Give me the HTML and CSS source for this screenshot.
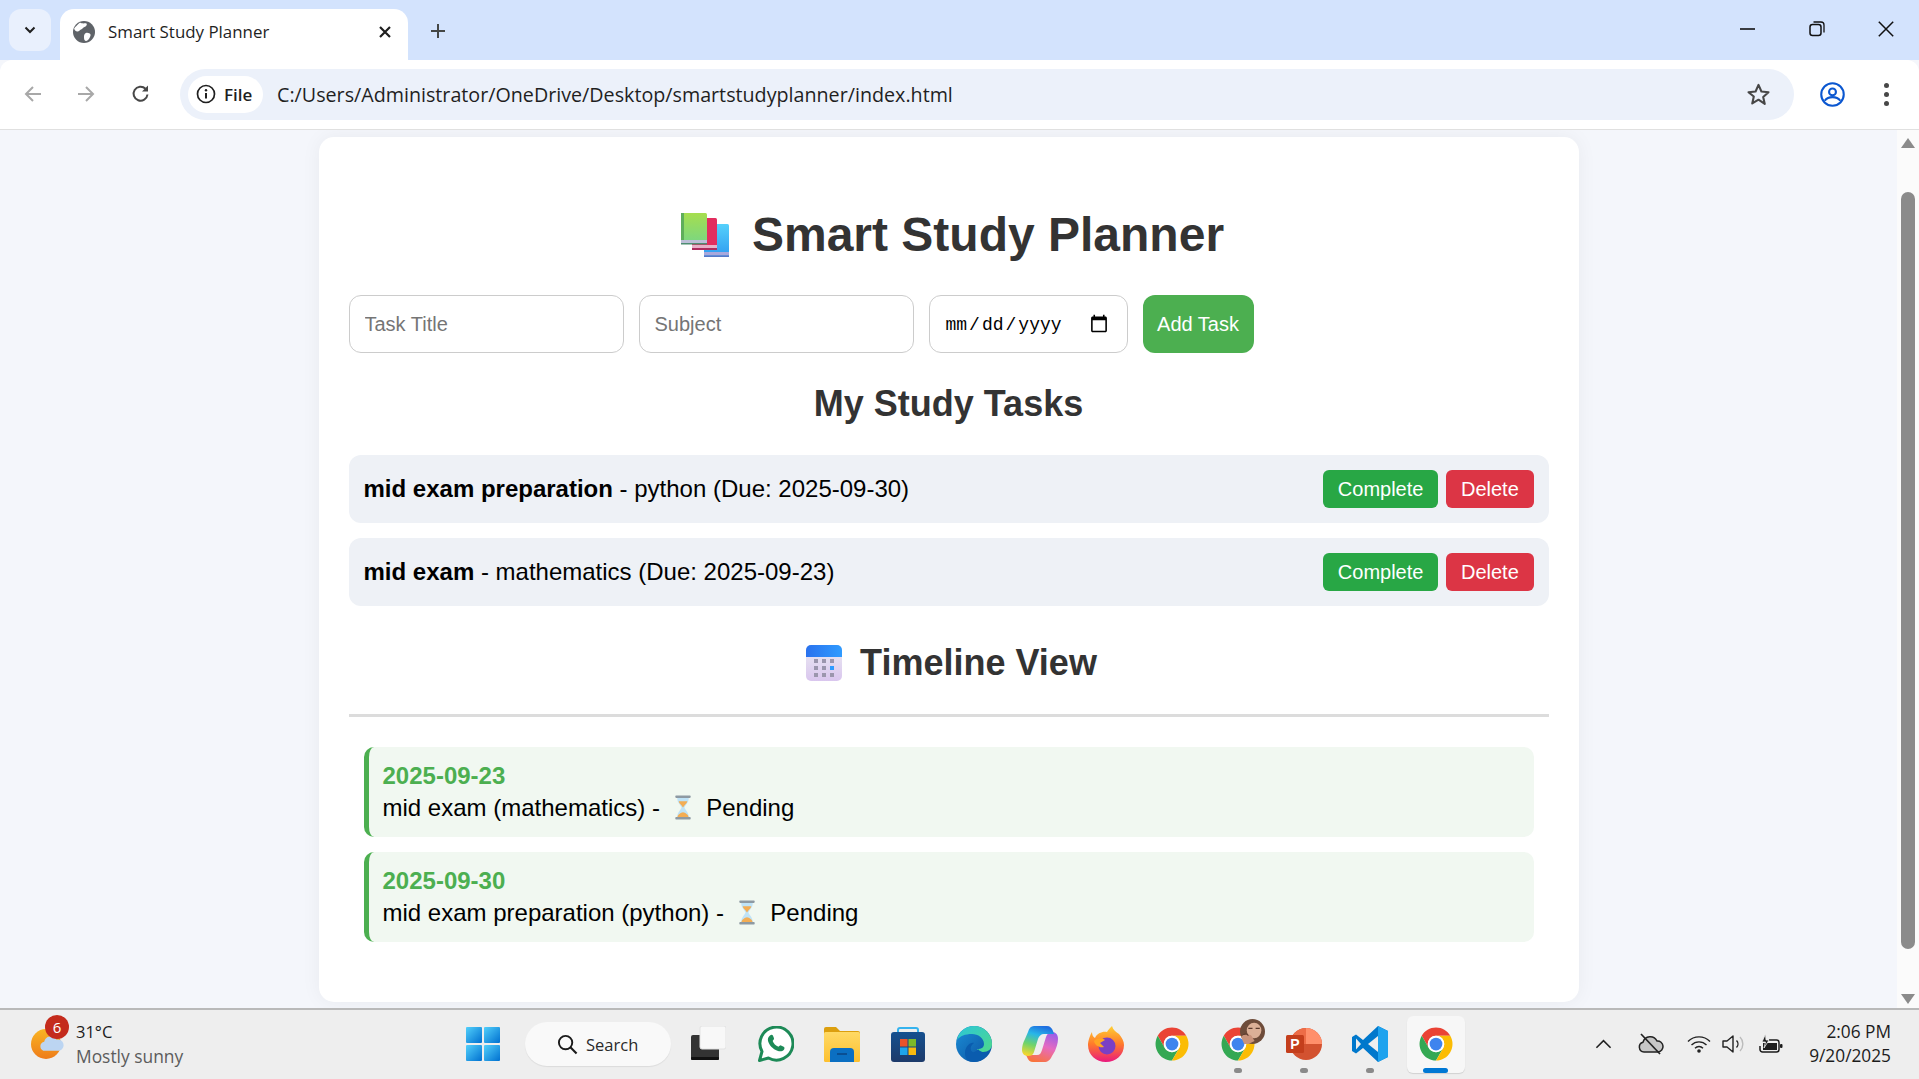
FILE: index.html
```html
<!DOCTYPE html>
<html lang="en">
<head>
<meta charset="utf-8">
<title>Smart Study Planner</title>
<link rel="stylesheet" href="styles.css">
</head>
<body>
<svg class="defs" aria-hidden="true">
  <defs>
    <linearGradient id="gBookG" x1="0" y1="0" x2="0" y2="1"><stop offset="0" stop-color="#a6de4e"/><stop offset="1" stop-color="#78d684"/></linearGradient>
    <linearGradient id="gBookB" x1="0" y1="0" x2="0" y2="1"><stop offset="0" stop-color="#55d0fb"/><stop offset="1" stop-color="#2f9bf0"/></linearGradient>
    <linearGradient id="gCalTop" x1="0" y1="0" x2="1" y2="0"><stop offset="0" stop-color="#2a72ee"/><stop offset="1" stop-color="#2f9bff"/></linearGradient>
    <linearGradient id="gCal" x1="0" y1="0" x2="0" y2="1"><stop offset="0" stop-color="#ececf2"/><stop offset="1" stop-color="#d9c6ee"/></linearGradient>
    <linearGradient id="gWin" x1="0" y1="0" x2="1" y2="1"><stop offset="0" stop-color="#52d0fb"/><stop offset="1" stop-color="#0070d0"/></linearGradient>
    <linearGradient id="gFolder" x1="0" y1="0" x2="0" y2="1"><stop offset="0" stop-color="#ffd965"/><stop offset="1" stop-color="#fdc02f"/></linearGradient>
    <linearGradient id="gStore" x1="0" y1="0" x2="0" y2="1"><stop offset="0" stop-color="#15508f"/><stop offset="1" stop-color="#1d3a6a"/></linearGradient>
    <linearGradient id="gEdge" x1="0" y1="0" x2="1" y2="1"><stop offset="0" stop-color="#2cc6d8"/><stop offset="1" stop-color="#4ed98b"/></linearGradient>
    <linearGradient id="gEdgeB" x1="0" y1="0" x2="1" y2="1"><stop offset="0" stop-color="#1b8fd8"/><stop offset="1" stop-color="#0b4f9e"/></linearGradient>
    <linearGradient id="gCopA" x1="0.6" y1="0" x2="0.3" y2="1"><stop offset="0" stop-color="#1f6fe0"/><stop offset="0.3" stop-color="#28b6e8"/><stop offset="0.65" stop-color="#6fd36a"/><stop offset="1" stop-color="#f2d62e"/></linearGradient>
    <linearGradient id="gCopB" x1="0.7" y1="0" x2="0.3" y2="1"><stop offset="0" stop-color="#9a5fe8"/><stop offset="0.45" stop-color="#e66ac0"/><stop offset="1" stop-color="#f9743a"/></linearGradient>
    <linearGradient id="gFox" x1="0" y1="0" x2="0" y2="1"><stop offset="0" stop-color="#ffd033"/><stop offset="0.5" stop-color="#ff7a2b"/><stop offset="1" stop-color="#e9197e"/></linearGradient>
    <linearGradient id="gSun" x1="0" y1="0" x2="0" y2="1"><stop offset="0" stop-color="#f9b524"/><stop offset="1" stop-color="#ee7c1a"/></linearGradient>
    <symbol id="chrome" viewBox="0 0 48 48">
      <path fill="#ea4335" d="M24 2C15.900 2 8.800 6.400 5 13l9.500 16.500A11 11 0 0 1 24 13h19.050C39.200 6.400 32.100 2 24 2z"/>
      <path fill="#34a853" d="M5 13A22 22 0 0 0 24 46l9.500-16.500A11 11 0 0 1 14.500 29.500z"/>
      <path fill="#fbbc04" d="M43.050 13H24a11 11 0 0 1 9.500 16.500L24 46A22 22 0 0 0 43.050 13z"/>
      <circle cx="24" cy="24" r="11" fill="#fff"/>
      <circle cx="24" cy="24" r="8.500" fill="#3f84ee"/>
    </symbol>
    <symbol id="hourglass" viewBox="0 0 20 26">
      <rect x="2" y="0.500" width="16" height="2.500" rx="0.800" fill="#8e9aa3"/>
      <rect x="2" y="23" width="16" height="2.500" rx="0.800" fill="#8e9aa3"/>
      <path d="M4 3h12c0 5-3.500 7-4.500 10 1 3 4.500 5 4.500 10H4c0-5 3.500-7 4.500-10C7.500 10 4 8 4 3z" fill="#bfe3f7"/>
      <path d="M5.500 6.500h9C14 9 11.500 10.500 10 13 8.500 10.500 6 9 5.500 6.500z" fill="#f3ad54"/>
      <path d="M4.200 23c.3-2.500 3.500-4.500 5.800-5 2.300.5 5.500 2.500 5.800 5z" fill="#f3ad54"/>
    </symbol>
  </defs>
</svg>

<header class="tabstrip">
  <div class="tab-search">
    <svg class="ic16" viewBox="0 0 16 16"><path d="M3.500 5.500 8 10l4.500-4.500" fill="none" stroke="#1f1f1f" stroke-width="2"/></svg>
  </div>
  <div class="tab">
    <svg class="favicon" viewBox="0 0 22 22"><circle cx="11" cy="11" r="11" fill="#5f6368"/><path d="M7 1.500c2 1.500 5 .5 6.500 1 1 1-.5 3-2 3.500S9.500 8 8 8.500 6 11 4 10.500 1 8 1.200 7.500 5 3 7 1.500zM13 12c2-.5 4 .5 4.500 1.500s-1 4-2.500 5.500-3 1-3.500 0-.5-2.500-.5-3.500.5-3 2-3.500z" fill="#fff"/></svg>
    <span class="tab-title">Smart Study Planner</span>
    <svg class="tab-close" viewBox="0 0 14 14"><path d="M2 2l10 10M12 2 2 12" stroke="#1f1f1f" stroke-width="2.200"/></svg>
  </div>
  <svg class="new-tab" viewBox="0 0 16 16"><path d="M8 1v14M1 8h14" stroke="#444746" stroke-width="2"/></svg>
  <div class="win-controls">
    <svg class="win-btn" viewBox="0 0 16 16"><path d="M0 8h15" stroke="#111" stroke-width="1.600"/></svg>
    <svg class="win-btn" viewBox="0 0 16 16"><rect x="1" y="3.500" width="11" height="11" rx="2.500" fill="none" stroke="#111" stroke-width="1.500"/><path d="M4.500 1h7.500a3 3 0 0 1 3 3v7.500" fill="none" stroke="#111" stroke-width="1.300"/></svg>
    <svg class="win-btn" viewBox="0 0 16 16"><path d="M.8.800l14.400 14.400M15.200.800.800 15.200" stroke="#111" stroke-width="1.500"/></svg>
  </div>
</header>

<nav class="toolbar">
  <svg class="nav-ic" viewBox="0 0 20 20"><path d="M18 10H3M10 3l-7 7 7 7" fill="none" stroke="#a8a8a8" stroke-width="2"/></svg>
  <svg class="nav-ic" viewBox="0 0 20 20"><path d="M2 10h15M10 3l7 7-7 7" fill="none" stroke="#a8a8a8" stroke-width="2"/></svg>
  <svg class="nav-ic nav-reload" viewBox="0 0 20 20"><path d="M16.500 10.500A7 7 0 1 1 14.500 4.700" fill="none" stroke="#474747" stroke-width="2"/><path d="M17 1.500V7.500h-6z" fill="#474747"/></svg>
  <div class="omnibox">
    <div class="chip">
      <svg class="info" viewBox="0 0 20 20"><circle cx="10" cy="10" r="8.500" fill="none" stroke="#1f1f1f" stroke-width="1.700"/><path d="M10 9v5.500" stroke="#1f1f1f" stroke-width="2"/><circle cx="10" cy="6.200" r="1.200" fill="#1f1f1f"/></svg>
      <span class="chip-text">File</span>
    </div>
    <span class="url">C:/Users/Administrator/OneDrive/Desktop/smartstudyplanner/index.html</span>
    <svg class="star" viewBox="0 0 24 24"><path d="M12 2.800l2.800 6.300 6.800.7-5.100 4.600 1.500 6.700L12 17l-6 3.600 1.500-6.700L2.400 9.800l6.800-.7z" fill="none" stroke="#474747" stroke-width="2" stroke-linejoin="round"/></svg>
  </div>
  <svg class="profile" viewBox="0 0 24 24"><circle cx="12" cy="12" r="10.800" fill="none" stroke="#0b57d0" stroke-width="2"/><circle cx="12" cy="9.500" r="3.300" fill="none" stroke="#0b57d0" stroke-width="2"/><path d="M4.500 18c2-2.700 4.500-3.500 7.500-3.500s5.500.8 7.500 3.500" fill="none" stroke="#0b57d0" stroke-width="2"/></svg>
  <div class="kebab"><i></i><i></i><i></i></div>
</nav>

<div class="viewport">
  <main class="page">
    <section class="card">
      <h1 class="title">
        <svg class="emoji-books" viewBox="0 0 48 44">
          <rect x="23" y="11" width="25" height="33" rx="1.500" fill="url(#gBookB)"/>
          <rect x="23" y="39" width="25" height="3.500" fill="#a9a8dc"/>
          <rect x="23" y="42.500" width="25" height="1.500" fill="#5878c8"/>
          <rect x="11" y="5" width="25" height="32" rx="1.500" fill="#e22d5e"/>
          <rect x="11" y="32" width="25" height="3" fill="#e8b0c8"/>
          <rect x="11" y="35" width="25" height="2" fill="#ad2c5e"/>
          <rect y="0" width="26" height="31" rx="1.500" fill="url(#gBookG)"/>
          <rect y="0" width="3" height="31" fill="#5fae5a"/>
          <rect x="0" y="27" width="26" height="3" fill="#bdbfd8"/>
          <rect x="0" y="30" width="26" height="1.500" fill="#4e8e72"/>
        </svg>
        <span>Smart Study Planner</span>
      </h1>

      <form class="task-form">
        <input class="field field-text" type="text" placeholder="Task Title">
        <input class="field field-text" type="text" placeholder="Subject">
        <input class="field field-date" type="date">
        <button class="add-btn" type="button">Add Task</button>
      </form>

      <h2 class="section-title">My Study Tasks</h2>

      <ul class="tasks">
        <li class="task">
          <span><b>mid exam preparation</b> - python (Due: 2025-09-30)</span>
          <span class="actions"><button class="btn btn-complete" type="button">Complete</button><button class="btn btn-delete" type="button">Delete</button></span>
        </li>
        <li class="task">
          <span><b>mid exam</b> - mathematics (Due: 2025-09-23)</span>
          <span class="actions"><button class="btn btn-complete" type="button">Complete</button><button class="btn btn-delete" type="button">Delete</button></span>
        </li>
      </ul>

      <h2 class="section-title timeline-title">
        <svg class="emoji-cal" viewBox="0 0 36 36">
          <rect width="36" height="36" rx="5" fill="url(#gCal)"/>
          <path d="M0 12V5a5 5 0 0 1 5-5h26a5 5 0 0 1 5 5v7z" fill="url(#gCalTop)"/>
          <g fill="#9b96ad">
            <rect x="8" y="14" width="4" height="4"/><rect x="16" y="14" width="4" height="4"/><rect x="24" y="14" width="4" height="4"/>
            <rect x="8" y="21" width="4" height="4"/><rect x="16" y="21" width="4" height="4"/>
            <rect x="8" y="28" width="4" height="4"/><rect x="16" y="28" width="4" height="4"/><rect x="24" y="28" width="4" height="4"/>
          </g>
          <rect x="24" y="21" width="4" height="4" fill="#2f9bff"/>
        </svg>
        <span>Timeline View</span>
      </h2>
      <div class="rule"></div>

      <div class="timeline">
        <article class="event">
          <div class="event-date">2025-09-23</div>
          <div class="event-text">mid exam (mathematics) - <svg class="emoji-glass"><use href="#hourglass"/></svg> Pending</div>
        </article>
        <article class="event">
          <div class="event-date">2025-09-30</div>
          <div class="event-text">mid exam preparation (python) - <svg class="emoji-glass"><use href="#hourglass"/></svg> Pending</div>
        </article>
      </div>
    </section>
  </main>
  <aside class="scrollbar">
    <svg class="sb-arrow" viewBox="0 0 14 10"><path d="M7 0l7 10H0z" fill="#8b8b8b"/></svg>
    <div class="sb-thumb"></div>
    <svg class="sb-arrow" viewBox="0 0 14 10"><path d="M0 0h14L7 10z" fill="#8b8b8b"/></svg>
  </aside>
</div>

<footer class="taskbar">
  <div class="weather">
    <div class="weather-icon">
      <svg class="sun" viewBox="0 0 36 32">
        <circle cx="15" cy="16" r="15" fill="url(#gSun)"/>
        <path d="M15 26a5 5 0 0 1 1-9.500 7 7 0 0 1 13-2 5.500 5.500 0 0 1 3 11.500z" fill="#bcd5f2" transform="translate(-2 -2) scale(.95)"/>
      </svg>
      <span class="badge">6</span>
    </div>
    <div class="weather-text">
      <span class="temp">31°C</span>
      <span class="cond">Mostly sunny</span>
    </div>
  </div>
  <div class="apps">
    <div class="app">
      <svg class="app-ic" viewBox="0 0 36 36"><rect x="1" y="1" width="16" height="16" rx="1" fill="url(#gWin)"/><rect x="19" y="1" width="16" height="16" rx="1" fill="url(#gWin)"/><rect x="1" y="19" width="16" height="16" rx="1" fill="url(#gWin)"/><rect x="19" y="19" width="16" height="16" rx="1" fill="url(#gWin)"/></svg>
    </div>
    <div class="search-pill">
      <svg class="search-ic" viewBox="0 0 22 22"><circle cx="9" cy="9" r="7" fill="none" stroke="#1a1a1a" stroke-width="2"/><path d="M14 14l6.500 6.500" stroke="#1a1a1a" stroke-width="2.200"/></svg>
      <span>Search</span>
    </div>
    <div class="app app-view">
      <svg class="app-ic" viewBox="0 0 36 36"><rect x="1" y="9" width="28" height="25" rx="2" fill="#333"/><rect x="1" y="31" width="28" height="3" rx="1" fill="#111"/><rect x="10" y="0" width="26" height="23" rx="2" fill="#f8f8f8" stroke="#e2e2e2"/></svg>
    </div>
    <div class="app">
      <svg class="app-ic" viewBox="0 0 36 36"><path d="M1.500 34.500l2.500-9A16.500 16.500 0 1 1 10.500 32z" fill="#fff" stroke="#1d8a57" stroke-width="3" stroke-linejoin="round"/><path d="M12 9.500c1-1 2.500-1 3 .2l1 2.600c.2.800-.8 2-1.300 2.600.8 2.500 3 4.700 5.800 5.800.7-.5 1.800-1.600 2.500-1.300l2.700 1.300c1 .5 1 2 .2 3-1.500 1.800-4 2-6.500 1-4.500-1.700-8-5.300-9.300-9.500-.6-2.500 0-4.300 1.900-5.700z" fill="#1d8a57"/></svg>
    </div>
    <div class="app">
      <svg class="app-ic" viewBox="0 0 36 36"><path d="M0 3a2 2 0 0 1 2-2h10l4 4h18a2 2 0 0 1 2 2v6H0z" fill="#dc9f0e"/><rect y="6" width="36" height="30" rx="1.500" fill="url(#gFolder)"/><path d="M6 36V26a4 4 0 0 1 4-4h16a4 4 0 0 1 4 4v10z" fill="#0b6fc2"/><rect x="13" y="27" width="10" height="2" fill="#0a4f93"/></svg>
    </div>
    <div class="app">
      <svg class="app-ic" viewBox="0 0 36 36"><path d="M8 9V4a2 2 0 0 1 2-2h16a2 2 0 0 1 2 2v5" fill="none" stroke="#35b3ee" stroke-width="2"/><rect x="1" y="6" width="34" height="30" rx="3" fill="url(#gStore)"/><rect x="10" y="13" width="7.500" height="7.500" fill="#e8532a"/><rect x="18.500" y="13" width="7.500" height="7.500" fill="#7db928"/><rect x="10" y="21.500" width="7.500" height="7.500" fill="#1ea5ea"/><rect x="18.500" y="21.500" width="7.500" height="7.500" fill="#fab90d"/></svg>
    </div>
    <div class="app">
      <svg class="app-ic" viewBox="0 0 36 36"><circle cx="18" cy="18" r="18" fill="url(#gEdgeB)"/><path d="M1 14C3 5 10 0 18 0c10 0 18 8 18 18 0 5-4 8-9 8-3 0-6-1-6-3 5 0 7-2 7-5 0-6-6-10-12-10C9 8 4 10 1 14z" fill="url(#gEdge)"/><path d="M22 23c2 3 6 4 11 3-3 6-9 10-15 10-6 0-9-3-9-9 0-6 5-11 9-10-3 2-4 5-3 7 1 3 4 3 7-1z" fill="#0a5cae"/></svg>
    </div>
    <div class="app">
      <svg class="app-ic" viewBox="0 0 36 36"><path d="M36 13c0 5-2 9-3 12l-3 5c-2 4-4 6-8 6H11c-3 0-5-2-6-5l-1-2h11c3 0 4-2 5-5l4-13c1-3 3-5 6-5 4 0 6 3 6 7z" fill="url(#gCopB)"/><path d="M12 0h13c3 0 5 2 6 5l1 3H22c-3 0-5 2-6 5l-4 13c-1 3-3 4-6 4-4 0-6-3-6-6 0-4 1-7 3-11l3-7c1-4 3-6 6-6z" fill="url(#gCopA)"/></svg>
    </div>
    <div class="app">
      <svg class="app-ic" viewBox="0 0 36 36"><path d="M24 0c1 4 4 6 7 8 3 4 5 7 5 11 0 10-8 17-18 17S0 29 0 19C0 15 2 9 4 6c0 3 1 5 3 6 2-5 8-7 12-6 1-2 3-4 5-6z" fill="url(#gFox)"/><circle cx="19" cy="20" r="8.500" fill="#7a3fc4"/><path d="M6 15c3-3 8-3 11-1l-5 3 4 4c-4 1-9-1-10-6z" fill="#ffa423"/></svg>
    </div>
    <div class="app"><svg class="app-ic"><use href="#chrome"/></svg></div>
    <div class="app app-open">
      <svg class="app-ic"><use href="#chrome"/></svg>
      <svg class="avatar" viewBox="0 0 24 24"><circle cx="12" cy="12" r="12" fill="#6e4c3a"/><ellipse cx="13.500" cy="11" rx="7" ry="7.500" fill="#dcb097"/><path d="M8 9h4M15 9h4" stroke="#5a3a2c" stroke-width="1.400"/><path d="M1 17c3-3 7-3 10-1l3 5-6 3H4z" fill="#c9937b"/><path d="M3 15c2-1 4-1 5 1" stroke="#5a3a2c" fill="none"/></svg>
    </div>
    <div class="app app-open">
      <svg class="app-ic" viewBox="0 0 36 36"><circle cx="20" cy="18" r="16" fill="#d35230"/><path d="M20 2a16 16 0 0 1 16 16H20z" fill="#ff8f6b"/><path d="M20 2a16 16 0 0 0-16 16h16z" fill="#ed6c47"/><rect x="0" y="9" width="18" height="18" rx="1.500" fill="#c43e1c"/><text class="ppt-p" x="9" y="23" text-anchor="middle">P</text></svg>
    </div>
    <div class="app app-open">
      <svg class="app-ic" viewBox="0 0 36 36"><path d="M26 0l10 5v26l-10 5-15-14-7 5.500-4-2.500V11l4-2.500L11 14z" fill="#0078cc"/><path d="M26 0l10 5v26l-10 5z" fill="#1fa3ee"/><path d="M26 10v16l-10-8z" fill="#eee"/><path d="M4 12.500v11l5-5.500z" fill="#eee"/></svg>
    </div>
    <div class="app app-active">
      <svg class="app-ic"><use href="#chrome"/></svg>
    </div>
  </div>
  <div class="tray">
    <svg class="tray-ic chevron" viewBox="0 0 18 12"><path d="M1.500 10 9 2.500 16.500 10" fill="none" stroke="#222" stroke-width="1.700"/></svg>
    <svg class="tray-ic cloud" viewBox="0 0 26 22"><path d="M6 19a5 5 0 0 1-1-9.800A7.500 7.500 0 0 1 19 8a5.500 5.500 0 0 1 1 11z" fill="#c6c6c6" stroke="#222" stroke-width="1.500"/><path d="M3 1l19 20" stroke="#222" stroke-width="1.700"/></svg>
    <svg class="tray-ic wifi" viewBox="0 0 24 18"><path d="M1 6.500a15.500 15.500 0 0 1 22 0M4.500 10a10.500 10.500 0 0 1 15 0M8 13.300a5.500 5.500 0 0 1 8 0" fill="none" stroke="#222" stroke-width="1.400"/><circle cx="12" cy="16" r="1.800" fill="#222"/></svg>
    <svg class="tray-ic vol" viewBox="0 0 24 20"><path d="M1 7h4l6-5v16l-6-5H1z" fill="none" stroke="#222" stroke-width="1.400" stroke-linejoin="round"/><path d="M14.500 6.500a5 5 0 0 1 0 7" fill="none" stroke="#222" stroke-width="1.400"/><path d="M18 3a10 10 0 0 1 0 14" fill="none" stroke="#bbb" stroke-width="1.400"/></svg>
    <svg class="tray-ic batt" viewBox="0 0 24 20"><path d="M10 6h7.500a2.500 2.500 0 0 1 2.500 2.500v7a2.500 2.500 0 0 1-2.500 2.500h-14A2.500 2.500 0 0 1 1 15.500V12" fill="none" stroke="#1c1c1c" stroke-width="1.500"/><rect x="4" y="9" width="14" height="7" fill="#1c1c1c"/><rect x="21" y="10" width="2.500" height="4" rx="1" fill="#1c1c1c"/><path d="M6.500 0 3 8h3.500L5 14l5-8H7z" fill="#1c1c1c" stroke="#eee" stroke-width=".800"/></svg>
    <div class="clock"><span>2:06 PM</span><span>9/20/2025</span></div>
  </div>
</footer>
</body>
</html>
```

FILE: styles.css
```css
* { box-sizing: border-box; }
html, body { margin: 0; height: 100%; }
body {
  width: 1919px;
  height: 1079px;
  overflow: hidden;
  display: flex;
  flex-direction: column;
  font-family: "Liberation Sans", Arial, sans-serif;
  background: #f4f6fb;
  color: #000;
}
.defs { position: absolute; width: 0; height: 0; }

/* Browser chrome */
.tabstrip {
  height: 60px;
  flex: none;
  display: flex;
  align-items: flex-start;
  padding: 9px 0 0 9px;
  background: #d3e3fd;
}
.tab-search {
  width: 42px;
  height: 42px;
  border-radius: 12px;
  background: #e9f0fd;
  display: flex;
  align-items: center;
  justify-content: center;
}
.ic16 { width: 16px; height: 16px; }
.tab {
  width: 348px;
  height: 51px;
  margin-left: 9px;
  padding: 0 16px 6px 13px;
  display: flex;
  align-items: center;
  background: #fff;
  border-radius: 14px 14px 0 0;
}
.favicon { width: 22px; height: 22px; flex: none; }
.tab-title {
  margin-left: 13px;
  flex: 1;
  font: 16.9px "Open Sans", sans-serif;
  color: #1f1f1f;
}
.tab-close { width: 14px; height: 14px; }
.new-tab { width: 16px; height: 16px; margin: 14px 0 0 22px; }
.win-controls {
  margin-left: auto;
  display: flex;
  gap: 53px;
  padding: 12px 25px 0 0;
}
.win-btn { width: 16px; height: 16px; }

.toolbar {
  height: 70px;
  flex: none;
  display: flex;
  align-items: center;
  background: #fff;
  border-bottom: 1px solid #e0e0e0;
  border-radius: 12px 12px 0 0;
  padding: 0 0 1px 23px;
}
.nav-ic { width: 20px; height: 20px; margin-right: 33px; flex: none; }
.nav-reload { margin-left: 2px; }
.omnibox {
  width: 1614px;
  height: 51px;
  margin-left: -4px;
  display: flex;
  align-items: center;
  padding: 0 23px 0 8px;
  background: #ecf1fa;
  border-radius: 26px;
}
.chip {
  width: 75px;
  height: 37px;
  flex: none;
  display: flex;
  align-items: center;
  gap: 8px;
  padding-left: 8px;
  background: #fff;
  border-radius: 19px;
}
.info { width: 20px; height: 20px; flex: none; }
.chip-text { font: 600 17px "Open Sans", sans-serif; color: #1f1f1f; }
.url {
  flex: 1;
  margin-left: 14px;
  font: 19.7px "Open Sans", sans-serif;
  color: #1f1f1f;
  white-space: nowrap;
}
.star { width: 25px; height: 25px; flex: none; }
.profile { width: 25px; height: 25px; margin-left: 26px; flex: none; }
.kebab {
  margin-left: 39px;
  display: flex;
  flex-direction: column;
  gap: 4px;
}
.kebab i { width: 5px; height: 5px; border-radius: 50%; background: #474747; display: block; }

/* Page viewport */
.viewport {
  flex: 1;
  min-height: 0;
  display: flex;
}
.page {
  flex: 1;
  display: flex;
  justify-content: center;
  padding-top: 7px;
  overflow: hidden;
}
.card {
  width: 1260px;
  height: 865px;
  padding: 61px 30px 0;
  background: #fff;
  border-radius: 15px;
  box-shadow: 0 0 20px rgba(0, 0, 0, 0.05);
}
.title {
  margin: 0;
  height: 74px;
  padding-left: 8px;
  display: flex;
  align-items: center;
  justify-content: center;
  gap: 23px;
  font-size: 48px;
  line-height: 74px;
  font-weight: 700;
  color: #333;
}
.emoji-books { width: 48px; height: 44px; }
.task-form {
  display: flex;
  gap: 15px;
  margin-top: 23px;
}
.field {
  height: 58px;
  padding: 0 15px;
  font-family: "Liberation Sans", Arial, sans-serif;
  font-size: 20px;
  background: #fff;
  border: 1.25px solid #ccc;
  border-radius: 12px;
}
.field::placeholder { color: #757575; }
.field-text { width: 275px; }
.field-date { width: 199px; padding-right: 16px; }
.field-date::-webkit-datetime-edit {
  padding-top: 2px;
  font-family: "Liberation Mono", monospace;
  font-size: 18px;
}
.field-date::-webkit-datetime-edit-text { padding: 0 1px; }
.add-btn {
  width: 111px;
  height: 58px;
  font-family: inherit;
  font-size: 20px;
  color: #fff;
  background: #4caf50;
  border: 0;
  border-radius: 12px;
}
.section-title {
  margin: 0;
  text-align: center;
  font-size: 36px;
  line-height: 44px;
  font-weight: 700;
  color: #333;
}
.task-form + .section-title { margin-top: 29px; }
.tasks {
  list-style: none;
  margin: 29px 0 0;
  padding: 0;
  display: flex;
  flex-direction: column;
  gap: 15px;
}
.task {
  height: 68px;
  padding: 0 15px;
  display: flex;
  align-items: center;
  justify-content: space-between;
  font-size: 24px;
  background: #eef1f6;
  border-radius: 12px;
}
.actions { display: flex; gap: 8px; }
.btn {
  height: 38px;
  padding: 0 14.75px;
  font-family: inherit;
  font-size: 20px;
  color: #fff;
  border: 0;
  border-radius: 6px;
}
.btn-complete { background: #28a745; }
.btn-delete { background: #dc3545; }
.timeline-title {
  margin-top: 35px;
  padding-left: 6px;
  display: flex;
  align-items: center;
  justify-content: center;
  gap: 18px;
}
.emoji-cal { width: 36px; height: 36px; }
.rule {
  height: 3px;
  margin-top: 29px;
  background: #dcdcdc;
}
.timeline {
  margin-top: 30px;
  padding: 0 15px;
  display: flex;
  flex-direction: column;
  gap: 15px;
}
.event {
  height: 90px;
  padding: 13px 14px 0;
  font-size: 24px;
  line-height: 32px;
  background: #f1f8f1;
  border-left: 5px solid #4caf50;
  border-radius: 10px;
}
.event-date { font-weight: 700; color: #4caf50; }
.event-text { white-space: pre-wrap; }
.emoji-glass { width: 20px; height: 25px; margin: 0 6.5px; vertical-align: -4px; }

/* Scrollbar */
.scrollbar {
  width: 22px;
  flex: none;
  display: flex;
  flex-direction: column;
  align-items: center;
  padding: 8px 0 4px;
  background: #fbfbfb;
}
.sb-arrow { width: 14px; height: 10px; flex: none; }
.sb-thumb {
  width: 14px;
  flex: 1;
  margin: 44px 0 45px;
  border-radius: 7px;
  background: #8b8b8b;
}

/* Taskbar */
.taskbar {
  height: 71px;
  flex: none;
  display: flex;
  align-items: center;
  padding-bottom: 1px;
  background: #eeeeee;
  border-top: 2px solid #b9b9b9;
}
.weather {
  width: 450px;
  flex: none;
  display: flex;
  align-items: center;
  gap: 9px;
  padding-left: 31px;
}
.weather-icon { position: relative; width: 36px; height: 32px; }
.sun { width: 36px; height: 32px; }
.badge {
  position: absolute;
  left: 14px;
  top: -13px;
  width: 24px;
  height: 24px;
  border-radius: 50%;
  background: #c42b1c;
  color: #fff;
  font: 15px/24px "Open Sans", sans-serif;
  text-align: center;
}
.weather-text {
  display: flex;
  flex-direction: column;
  font: 17.4px/24px "Open Sans", sans-serif;
}
.temp { color: #1c1c1c; font-size: 16.5px; }
.cond { color: #5c5c5c; }
.apps { display: flex; align-items: center; }
.app {
  position: relative;
  width: 66px;
  height: 57px;
  flex: none;
  display: flex;
  align-items: center;
  justify-content: center;
}
.app-ic { width: 36px; height: 36px; }
.app-view { margin-right: 2px; margin-left: 4px; }
.app-open::after {
  content: "";
  position: absolute;
  left: 29px;
  bottom: 0;
  width: 8px;
  height: 5px;
  border-radius: 3px;
  background: #8a8a8a;
}
.app-active::before {
  content: "";
  position: absolute;
  inset: 0 4px;
  background: #f7f7f7;
  border-radius: 6px;
  box-shadow: 0 1px 1px rgba(0, 0, 0, 0.12);
}
.app-active .app-ic { position: relative; }
.app-active::after {
  content: "";
  position: absolute;
  left: 20px;
  bottom: 0;
  width: 25px;
  height: 5px;
  border-radius: 3px;
  background: #0078d4;
}
.avatar {
  position: absolute;
  left: 35px;
  top: 3px;
  width: 25px;
  height: 25px;
}
.ppt-p { font: 700 14px "Liberation Sans", sans-serif; fill: #fff; }
.search-pill {
  width: 146px;
  height: 44px;
  margin-left: 9px;
  display: flex;
  align-items: center;
  gap: 8px;
  padding-left: 32px;
  background: #f9f9f9;
  border-radius: 22px;
  box-shadow: 0 1px 1px rgba(0, 0, 0, 0.08);
  font: 16.5px "Open Sans", sans-serif;
  color: #2a2a2a;
}
.search-ic { width: 21px; height: 21px; flex: none; }
.tray {
  flex: 1;
  display: flex;
  align-items: center;
  padding-right: 28px;
}
.tray-ic { flex: none; }
.chevron { width: 17px; height: 12px; margin-left: 126px; }
.cloud { width: 26px; height: 22px; margin-left: 26px; }
.wifi { width: 24px; height: 18px; margin-left: 23px; }
.vol { width: 24px; height: 20px; margin-left: 11px; }
.batt { width: 24px; height: 20px; margin-left: 13px; }
.clock {
  margin-left: auto;
  display: flex;
  flex-direction: column;
  align-items: flex-end;
  font: 17.3px/24px "Open Sans", sans-serif;
  color: #1c1c1c;
}
```
